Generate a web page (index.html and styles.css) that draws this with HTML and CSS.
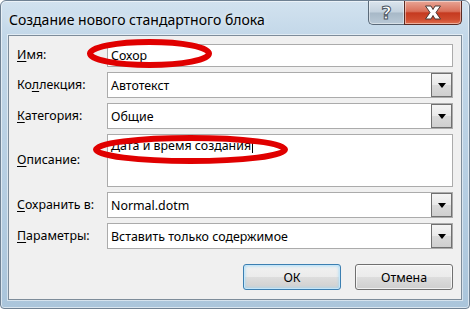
FILE: index.html
```html
<!DOCTYPE html>
<html lang="ru">
<head>
  <meta charset="UTF-8" />
  <title>Создание нового стандартного блока</title>
  <link rel="stylesheet" href="styles.css">
</head>
<body>

<div class="window">
  <div class="titlebar">
    <span class="title">Создание нового стандартного блока</span>
    <div class="caption-btns">
      <span class="cap-btn help"><span class="help-glyph">?</span></span>
      <span class="cap-btn close">
        <svg width="20" height="15" viewBox="0 0 20 15">
          <path d="M2.5 1 L8 1 L10 4.5 L12 1 L17.5 1 L13 7.5 L17.5 14 L12 14 L10 10.5 L8 14 L2.5 14 L7 7.5 Z" fill="#fff" stroke="#4a3a36" stroke-width="1" stroke-linejoin="round"/>
        </svg>
      </span>
    </div>
  </div>

  <div class="client">
    <div class="form">
      <label class="lbl"><u>И</u>мя:</label>
      <div class="field text row-name">Сохор</div>

      <label class="lbl">Ко<u>л</u>лекция:</label>
      <div class="field combo"><span class="value">Автотекст</span><span class="drop"></span></div>

      <label class="lbl"><u>К</u>атегория:</label>
      <div class="field combo"><span class="value">Общие</span><span class="drop"></span></div>

      <label class="lbl"><u>О</u>писание:</label>
      <div class="field memo">Дата и время создания<span class="caret"></span></div>

      <label class="lbl"><u>С</u>охранить в:</label>
      <div class="field combo"><span class="value">Normal.dotm</span><span class="drop"></span></div>

      <label class="lbl"><u>П</u>араметры:</label>
      <div class="field combo"><span class="value">Вставить только содержимое</span><span class="drop"></span></div>
    </div>

    <div class="actions">
      <button class="btn default">ОК</button>
      <button class="btn">Отмена</button>
    </div>
  </div>

  <!-- red marker circles drawn over the dialog -->
  <svg class="marks" width="470" height="309" viewBox="0 0 470 309">
    <ellipse cx="149.5" cy="53.5" rx="59.5" ry="11.5" fill="none" stroke="#e00000" stroke-width="6"/>
    <ellipse cx="190.5" cy="149.5" rx="94.5" ry="11.5" fill="none" stroke="#e00000" stroke-width="6"/>
  </svg>
</div>

</body>
</html>
```

FILE: styles.css
```css
html, body {
  margin: 0; padding: 0;
  background: #fff;
}

.window {
  position: relative;
  width: 470px;
  height: 309px;
  box-sizing: border-box;
  border: 1px solid #6f8193;
  border-radius: 6px 6px 4px 4px;
  padding: 0 7px 8px 7px;
  display: flex;
  flex-direction: column;
  background: linear-gradient(180deg, #d2e2ef 0%, #c2d7e8 12%, #b6cee2 60%, #aac5db 100%);
  box-shadow: inset 0 0 0 1px rgba(255,255,255,0.55);
  font-family: 'Noto Sans', 'Open Sans', sans-serif;
  overflow: hidden;
}

.titlebar {
  height: 34px;
  display: flex;
  align-items: flex-start;
  justify-content: space-between;
}

.title {
  margin: 9px 0 0 1px;
  font-size: 14px;
  color: #000;
  text-shadow: 0 0 6px rgba(255,255,255,0.9);
}

.caption-btns {
  display: flex;
}

.cap-btn {
  height: 24px;
  display: flex;
  align-items: center;
  justify-content: center;
  box-sizing: border-box;
  border: 1px solid #5b6a79;
  border-top: none;
  box-shadow: inset 0 0 0 1px rgba(255,255,255,0.45);
}

.cap-btn.help {
  width: 36px;
  border-radius: 0 0 0 5px;
  border-right: none;
  background: linear-gradient(180deg, #dbe5ee 0%, #c3d1dd 48%, #a7b8c7 52%, #b9c9d6 100%);
}

.help-glyph {
  font-family: 'DejaVu Sans', sans-serif;
  font-weight: 700;
  font-size: 18px;
  line-height: 1;
  color: #fff;
  -webkit-text-stroke: 1px #4b5763;
  margin-top: 1px;
}

.cap-btn.close {
  width: 58px;
  border-radius: 0 0 5px 0;
  border-color: #5a2a22;
  background: linear-gradient(180deg, #e8a595 0%, #d9705a 45%, #c53a20 52%, #cf4b2e 80%, #e07050 100%);
}

.client {
  flex: 1;
  background: #f0f0f0;
  border: 1px solid #7d8c9a;
  box-shadow: 0 0 0 1px rgba(255,255,255,0.5);
  padding: 8px 8px 9px 8px;
  display: flex;
  flex-direction: column;
  font-size: 12.4px;
  color: #000;
}

.form {
  display: grid;
  grid-template-columns: 90px 1fr;
  grid-template-rows: 23px 26px 26px 53px 26px 26px;
  row-gap: 5px;
}

.lbl {
  display: flex;
  align-items: center;
  line-height: 1;
}

.lbl u {
  text-decoration-thickness: 1px;
  text-underline-offset: 2px;
}

.field {
  box-sizing: border-box;
  border: 1px solid #ababab;
  background: #fff;
  display: flex;
  align-items: center;
  padding-left: 3px;
}

.memo {
  align-items: flex-start;
  padding-top: 2px;
}

.caret {
  display: inline-block;
  width: 1px;
  height: 14px;
  background: #000;
  margin: 2px 0 0 1px;
}

.combo .value {
  flex: 1;
}

.drop {
  width: 21px;
  height: 100%;
  box-sizing: border-box;
  border: 1px solid #707070;
  background: linear-gradient(180deg, #f4f4f4 0%, #e9e9e9 50%, #dadada 51%, #cfcfcf 100%);
  position: relative;
}

.drop::after {
  content: '';
  position: absolute;
  left: 6px;
  top: 9px;
  border-left: 4px solid transparent;
  border-right: 4px solid transparent;
  border-top: 5px solid #000;
}

.actions {
  margin-top: auto;
  display: flex;
  justify-content: flex-end;
  gap: 14px;
}

.btn {
  width: 98px;
  height: 26px;
  font-family: 'Noto Sans', 'Open Sans', sans-serif;
  font-size: 12.4px;
  color: #000;
  border: 1px solid #707070;
  border-radius: 3px;
  background: linear-gradient(180deg, #f2f2f2 0%, #ebebeb 50%, #dddddd 51%, #cfcfcf 100%);
  box-shadow: inset 0 0 0 1px rgba(255,255,255,0.7);
  padding: 0;
}

.btn.default {
  border-color: #3c7fb1;
  box-shadow: inset 0 0 0 1px #c5e6f9, inset 0 0 3px 1px #9fd7f7;
}

.marks {
  position: absolute;
  left: -1px;
  top: -1px;
  pointer-events: none;
}
```
